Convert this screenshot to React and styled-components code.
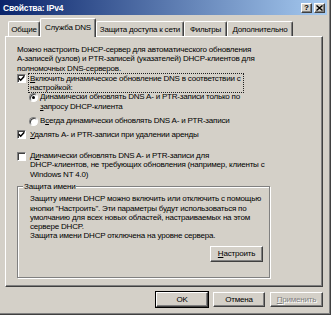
import React from 'react';
import styled, { createGlobalStyle } from 'styled-components';

const GlobalStyle = createGlobalStyle`
  html, body {
    margin: 0;
    padding: 0;
    background: #fff;
  }
  body {
    font-family: "Liberation Sans", Arial, sans-serif;
    font-size: 8px;
    letter-spacing: -0.2px;
    color: #000;
  }
`;

const Window = styled.div`
  width: 331px;
  height: 315px;
  box-sizing: border-box;
  background: #d4d0c8;
  padding: 0 4px 4px 0;
  box-shadow: inset -1px -1px 0 #404040, inset -2px -2px 0 #808080;
  display: flex;
  flex-direction: column;
`;

const TitleBar = styled.div`
  height: 15px;
  display: flex;
  align-items: center;
  justify-content: space-between;
  padding: 0 2px 0 3px;
  background: linear-gradient(to right, #0a246a, #a6caf0);
  color: #fff;
  font-weight: bold;
  font-size: 8.5px;
`;

const CaptionButtons = styled.div`
  display: flex;
  gap: 2px;
`;

const CaptionButton = styled.div`
  width: 11px;
  height: 10px;
  box-sizing: border-box;
  background: #d4d0c8;
  border-top: 1px solid #fff;
  border-left: 1px solid #fff;
  border-right: 1px solid #404040;
  border-bottom: 1px solid #404040;
  box-shadow: inset -1px -1px 0 #808080;
  display: flex;
  align-items: center;
  justify-content: center;
  color: #000;
  font-size: 8px;
  font-weight: bold;
  line-height: 1;
  letter-spacing: 0;
`;

const TabStrip = styled.div`
  display: flex;
  align-items: flex-end;
  height: 18px;
  margin-top: 3px;
  padding-left: 8px;
`;

const Tab = styled.div`
  width: ${p => p.$w}px;
  height: ${p => (p.$active ? 19 : 15)}px;
  margin-bottom: ${p => (p.$active ? -1 : 0)}px;
  position: relative;
  z-index: ${p => (p.$active ? 1 : 0)};
  box-sizing: border-box;
  background: #d4d0c8;
  border-top: 1px solid #fff;
  border-left: 1px solid #fff;
  border-right: 1px solid #404040;
  box-shadow: inset -1px 0 0 #808080;
  border-radius: 2px 2px 0 0;
  display: flex;
  align-items: center;
  justify-content: center;
  white-space: nowrap;
  padding-bottom: ${p => (p.$active ? 1 : 0)}px;
`;

const Panel = styled.div`
  width: 318px;
  height: 251px;
  margin-left: 5px;
  box-sizing: border-box;
  border-top: 1px solid #fff;
  border-left: 1px solid #fff;
  border-right: 1px solid #404040;
  border-bottom: 1px solid #404040;
  box-shadow: inset -1px -1px 0 #808080;
  padding: 8px 0 0 11px;
  line-height: 9.3px;
  white-space: nowrap;
`;

const Text = styled.div`
  line-height: 9.3px;
`;

const Option = styled.div`
  display: flex;
  align-items: flex-start;
  margin-top: ${p => p.$top || 0}px;
  margin-left: ${p => p.$indent || 0}px;
`;

const CheckBox = styled.div`
  width: 9px;
  height: 9px;
  margin-top: 0.5px;
  flex: none;
  box-sizing: border-box;
  background: #fff;
  border-top: 1px solid #808080;
  border-left: 1px solid #808080;
  border-right: 1px solid #fff;
  border-bottom: 1px solid #fff;
  box-shadow: inset 1px 1px 0 #404040;
  display: flex;
  align-items: center;
  justify-content: center;
`;

const Radio = styled.div`
  width: 9px;
  height: 9px;
  margin-top: 0.5px;
  flex: none;
  box-sizing: border-box;
  border-radius: 50%;
  background: #fff;
  border: 1px solid;
  border-color: #808080 #fff #fff #808080;
  box-shadow: inset 1px 1px 0 #404040;
  display: flex;
  align-items: center;
  justify-content: center;
  &::after {
    content: '';
    width: 3px;
    height: 3px;
    border-radius: 50%;
    background: ${p => (p.$checked ? '#000' : 'transparent')};
  }
`;

const Label = styled.div`
  margin-left: ${p => p.$gap || 4}px;
  line-height: 9.3px;
  ${p => p.$focus && 'outline: 1px dotted #202020; outline-offset: 0; padding: 0 2px 0 1px;'}
`;

const Key = styled.span`
  text-decoration: underline;
`;

const GroupBox = styled.div`
  width: 253px;
  height: 92px;
  margin-top: 7px;
  box-sizing: border-box;
  border: 1px solid #808080;
  box-shadow: inset 1px 1px 0 #fff, 1px 1px 0 #fff;
  padding: 0 6px 0 12px;
  display: flex;
  flex-direction: column;
`;

const Legend = styled.div`
  align-self: flex-start;
  margin: -5px 0 0 -7px;
  padding: 0 1px;
  background: #d4d0c8;
  line-height: 9.3px;
`;

const GroupText = styled.div`
  margin-top: 3px;
  line-height: 9.3px;
`;

const Button = styled.button`
  width: ${p => p.$w || 52}px;
  height: ${p => p.$h || 15}px;
  box-sizing: border-box;
  background: #d4d0c8;
  font-family: inherit;
  font-size: 8px;
  letter-spacing: -0.2px;
  padding: 0;
  color: ${p => (p.$disabled ? '#808080' : '#000')};
  text-shadow: ${p => (p.$disabled ? '1px 1px 0 #fff' : 'none')};
  border-top: 1px solid #fff;
  border-left: 1px solid #fff;
  border-right: 1px solid #404040;
  border-bottom: 1px solid #404040;
  box-shadow: inset -1px -1px 0 #808080${p => (p.$default ? ', 0 0 0 1px #000' : '')};
`;

const GroupButton = styled(Button)`
  align-self: flex-end;
  margin-top: 5px;
`;

const ButtonRow = styled.div`
  width: 323px;
  margin-top: 5px;
  display: flex;
  justify-content: flex-end;
  gap: 5px;
`;

const Check = () => (
  <svg width="7" height="7" viewBox="0 0 7 7">
    <path d="M0.8 3.2 L2.7 5.2 L6.3 1.2" fill="none" stroke="#000" strokeWidth="1.5" />
  </svg>
);

const tabs = [
  { label: 'Общие', w: 32 },
  { label: 'Служба DNS', w: 56, active: true },
  { label: 'Защита доступа к сети', w: 88 },
  { label: 'Фильтры', w: 43 },
  { label: 'Дополнительно', w: 66 },
];

export default function App() {
  return (
    <>
      <GlobalStyle />
      <Window>
        <TitleBar>
          <span>Свойства: IPv4</span>
          <CaptionButtons>
            <CaptionButton>?</CaptionButton>
            <CaptionButton>
              <svg width="7" height="6" viewBox="0 0 7 6">
                <path d="M0.5 0.5 L6.5 5.5 M6.5 0.5 L0.5 5.5" stroke="#000" strokeWidth="1.4" />
              </svg>
            </CaptionButton>
          </CaptionButtons>
        </TitleBar>

        <TabStrip>
          {tabs.map(t => (
            <Tab key={t.label} $w={t.w} $active={t.active}>{t.label}</Tab>
          ))}
        </TabStrip>

        <Panel>
          <Text>
            Можно настроить DHCP-сервер для автоматического обновления<br />
            A-записей (узлов) и PTR-записей (указателей) DHCP-клиентов для<br />
            полномочных DNS-серверов.
          </Text>

          <Option $top={1}>
            <CheckBox><Check /></CheckBox>
            <Label $gap={3} $focus>
              <Key>В</Key>ключить динамическое обновление DNS в соответствии с<br />
              настройкой:
            </Label>
          </Option>

          <Option $indent={12}>
            <Radio $checked />
            <Label $gap={2}>
              Динамически обновлять DNS A- и PTR-записи только по<br />
              <Key>з</Key>апросу DHCP-клиента
            </Label>
          </Option>

          <Option $indent={12} $top={5}>
            <Radio />
            <Label $gap={2}>В<Key>с</Key>егда динамически обновлять DNS A- и PTR-записи</Label>
          </Option>

          <Option $top={4}>
            <CheckBox><Check /></CheckBox>
            <Label><Key>У</Key>далять A- и PTR-записи при удалении аренды</Label>
          </Option>

          <Option $top={12}>
            <CheckBox />
            <Label>
              Д<Key>и</Key>намически обновлять DNS A- и PTR-записи для<br />
              DHCP-клиентов, не требующих обновления (например, клиенты с<br />
              Windows NT 4.0)
            </Label>
          </Option>

          <GroupBox>
            <Legend>Защита имени</Legend>
            <GroupText>
              Защиту имени DHCP можно включить или отключить с помощью<br />
              кнопки "Настроить". Эти параметры будут использоваться по<br />
              умолчанию для всех новых областей, настраиваемых на этом<br />
              сервере DHCP.<br />
              Защита имени DHCP отключена на уровне сервера.
            </GroupText>
            <GroupButton $w={53} $h={16}><Key>Н</Key>астроить</GroupButton>
          </GroupBox>
        </Panel>

        <ButtonRow>
          <Button $default>OK</Button>
          <Button>Отмена</Button>
          <Button $w={53} $disabled><Key>П</Key>рименить</Button>
        </ButtonRow>
      </Window>
    </>
  );
}
